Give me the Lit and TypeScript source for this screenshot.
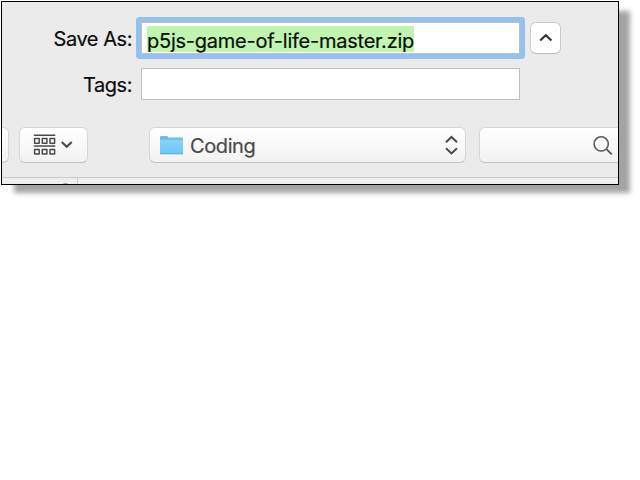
import { LitElement, html, css } from "lit";
import { customElement } from "lit/decorators.js";

@customElement("app-root")
export class AppRoot extends LitElement {
  static styles = css`
    :host {
      display: block;
      width: 640px;
      height: 480px;
      background: #fff;
      overflow: hidden;
      font-family: Inter, "Liberation Sans", sans-serif;
      font-size: 20px;
      color: #0c0c0c;
    }
    * { box-sizing: border-box; }
    svg { display: block; flex: none; }
    .dialog {
      width: 618px;
      height: 184px;
      margin: 1px;
      border: 1px solid #000;
      background: #ebebeb;
      box-shadow: 12px 9px 5px -1px #a3a3a3;
      overflow: hidden;
      display: flex;
      flex-direction: column;
    }
    .row { display: flex; flex: none; align-items: center; }
    .name { height: 32px; margin-top: 20px; }
    .tags { height: 32px; margin-top: 14px; }
    .label {
      width: 130px;
      height: 32px;
      margin-right: 9px;
      text-align: right;
      line-height: 34px;
      letter-spacing: -0.45px;
      -webkit-text-stroke: 0.2px #0c0c0c;
      white-space: nowrap;
    }
    .field {
      width: 379px;
      height: 32px;
      background: #fff;
      border: 1px solid #bfbfbf;
      display: flex;
      align-items: center;
      padding: 1px 0 0 5px;
    }
    .focus { box-shadow: 0 0 0 5px #94c0f2; border-radius: 1px; }
    .selected {
      width: 267px;
      height: 26px;
      line-height: 30px;
      letter-spacing: -0.24px;
      -webkit-text-stroke: 0.2px #0c0c0c;
      background: #bff5ae;
      white-space: nowrap;
    }
    .expand {
      width: 31px;
      height: 32px;
      margin-left: 10px;
      background: #fff;
      border: 1px solid #cbcbcb;
      border-bottom-color: #bdbdbd;
      border-radius: 6px;
      display: flex;
      align-items: center;
      justify-content: center;
    }
    .tools { margin-top: 27px; height: 36px; }
    .button {
      height: 36px;
      flex: none;
      display: flex;
      align-items: center;
      background: linear-gradient(#fff, #f2f2f2);
      border: 1px solid #d6d6d6;
      border-bottom-color: #c2c2c2;
      border-radius: 6px;
    }
    .nav { width: 12px; margin-left: -5px; margin-right: 10px; }
    .view { width: 69px; margin-right: 61px; padding-left: 13px; }
    .view .down { margin-left: 5px; }
    .folder { width: 317px; margin-right: 13px; padding: 0 6px 0 10px; color: #4a4a4a; }
    .place {
      margin-left: 6px;
      flex: 1;
      line-height: 24px;
      padding-top: 1px;
      letter-spacing: -0.4px;
      -webkit-text-stroke: 0.2px #4a4a4a;
    }
    .search { width: 160px; padding-left: 112px; }
    .list {
      flex: 1;
      margin-top: 14px;
      border-top: 1px solid #cacaca;
      background: #f0f0f0;
      display: flex;
    }
    .side {
      width: 76px;
      border-right: 1px solid #d0d0d0;
      background: #eeeeee;
      display: flex;
      justify-content: flex-end;
    }
    .dot { width: 9px; height: 9px; margin: 5px 7px 0 0; border-radius: 50%; background: #999; flex: none; }
  `;

  render() {
    return html`
      <div class="dialog">
        <div class="row name">
          <div class="label">Save As:</div>
          <div class="field focus"><span class="selected">p5js-game-of-life-master.zip</span></div>
          <div class="expand">
            <svg width="14" height="10" viewBox="0 0 14 10" fill="none" stroke="#303033" stroke-width="2.1">
              <path d="M1.2 7.5 6.8 2.3 12.4 7.5" />
            </svg>
          </div>
        </div>
        <div class="row tags">
          <div class="label">Tags:</div>
          <div class="field"></div>
        </div>
        <div class="row tools">
          <div class="button nav"></div>
          <div class="button view">
            <svg width="23" height="22" viewBox="0 0 23 22" fill="none" stroke="#4a4a4a" stroke-width="1.5" stroke-linejoin="round">
              <path d="M.8 1.2H22.3M.8 12H22.3" />
              <path d="M1.6 4.6h4.6v4.6h-4.6zM9.3 4.6h4.6v4.6h-4.6zM17 4.6h4.6v4.6H17zM1.6 15.4h4.6V20h-4.6zM9.3 15.4h4.6V20h-4.6zM17 15.4h4.6V20H17z" />
            </svg>
            <svg class="down" width="12" height="8" viewBox="0 0 12 8" fill="none" stroke="#4a4a4a" stroke-width="2.2">
              <path d="M.7 1 5.7 5.7 10.7 1" />
            </svg>
          </div>
          <div class="button folder">
            <svg width="24" height="20" viewBox="0 0 24 20">
              <defs>
                <linearGradient id="front" x1="0" y1="0" x2="0" y2="1">
                  <stop offset="0" stop-color="#84d3f8" />
                  <stop offset="1" stop-color="#6cc8f7" />
                </linearGradient>
              </defs>
              <path d="M0 2Q0 1 1 1H6.5Q7.5 1 8 1.8L8.5 2.4H22Q23 2.4 23 3.4V18.5H0Z" fill="#66bde6" />
              <path d="M0 4.7H23V18.5H0Z" fill="url(#front)" />
              <path d="M0 18.8H23" stroke="#57a9d0" />
            </svg>
            <span class="place">Coding</span>
            <svg width="14" height="20" viewBox="0 0 14 20" fill="none" stroke="#4a4a4a" stroke-width="2">
              <path d="M1 7.2 6.5 2 12 7.2M1 13.2 6.5 18.4 12 13.2" />
            </svg>
          </div>
          <div class="button search">
            <svg width="22" height="20" viewBox="0 0 22 20" fill="none" stroke="#555" stroke-width="1.5">
              <circle cx="9.2" cy="8.9" r="7.1" />
              <path d="M14.2 13.8 19.8 19.4" stroke-width="1.8" />
            </svg>
          </div>
        </div>
        <div class="list"><div class="side"><div class="dot"></div></div></div>
      </div>
    `;
  }
}
